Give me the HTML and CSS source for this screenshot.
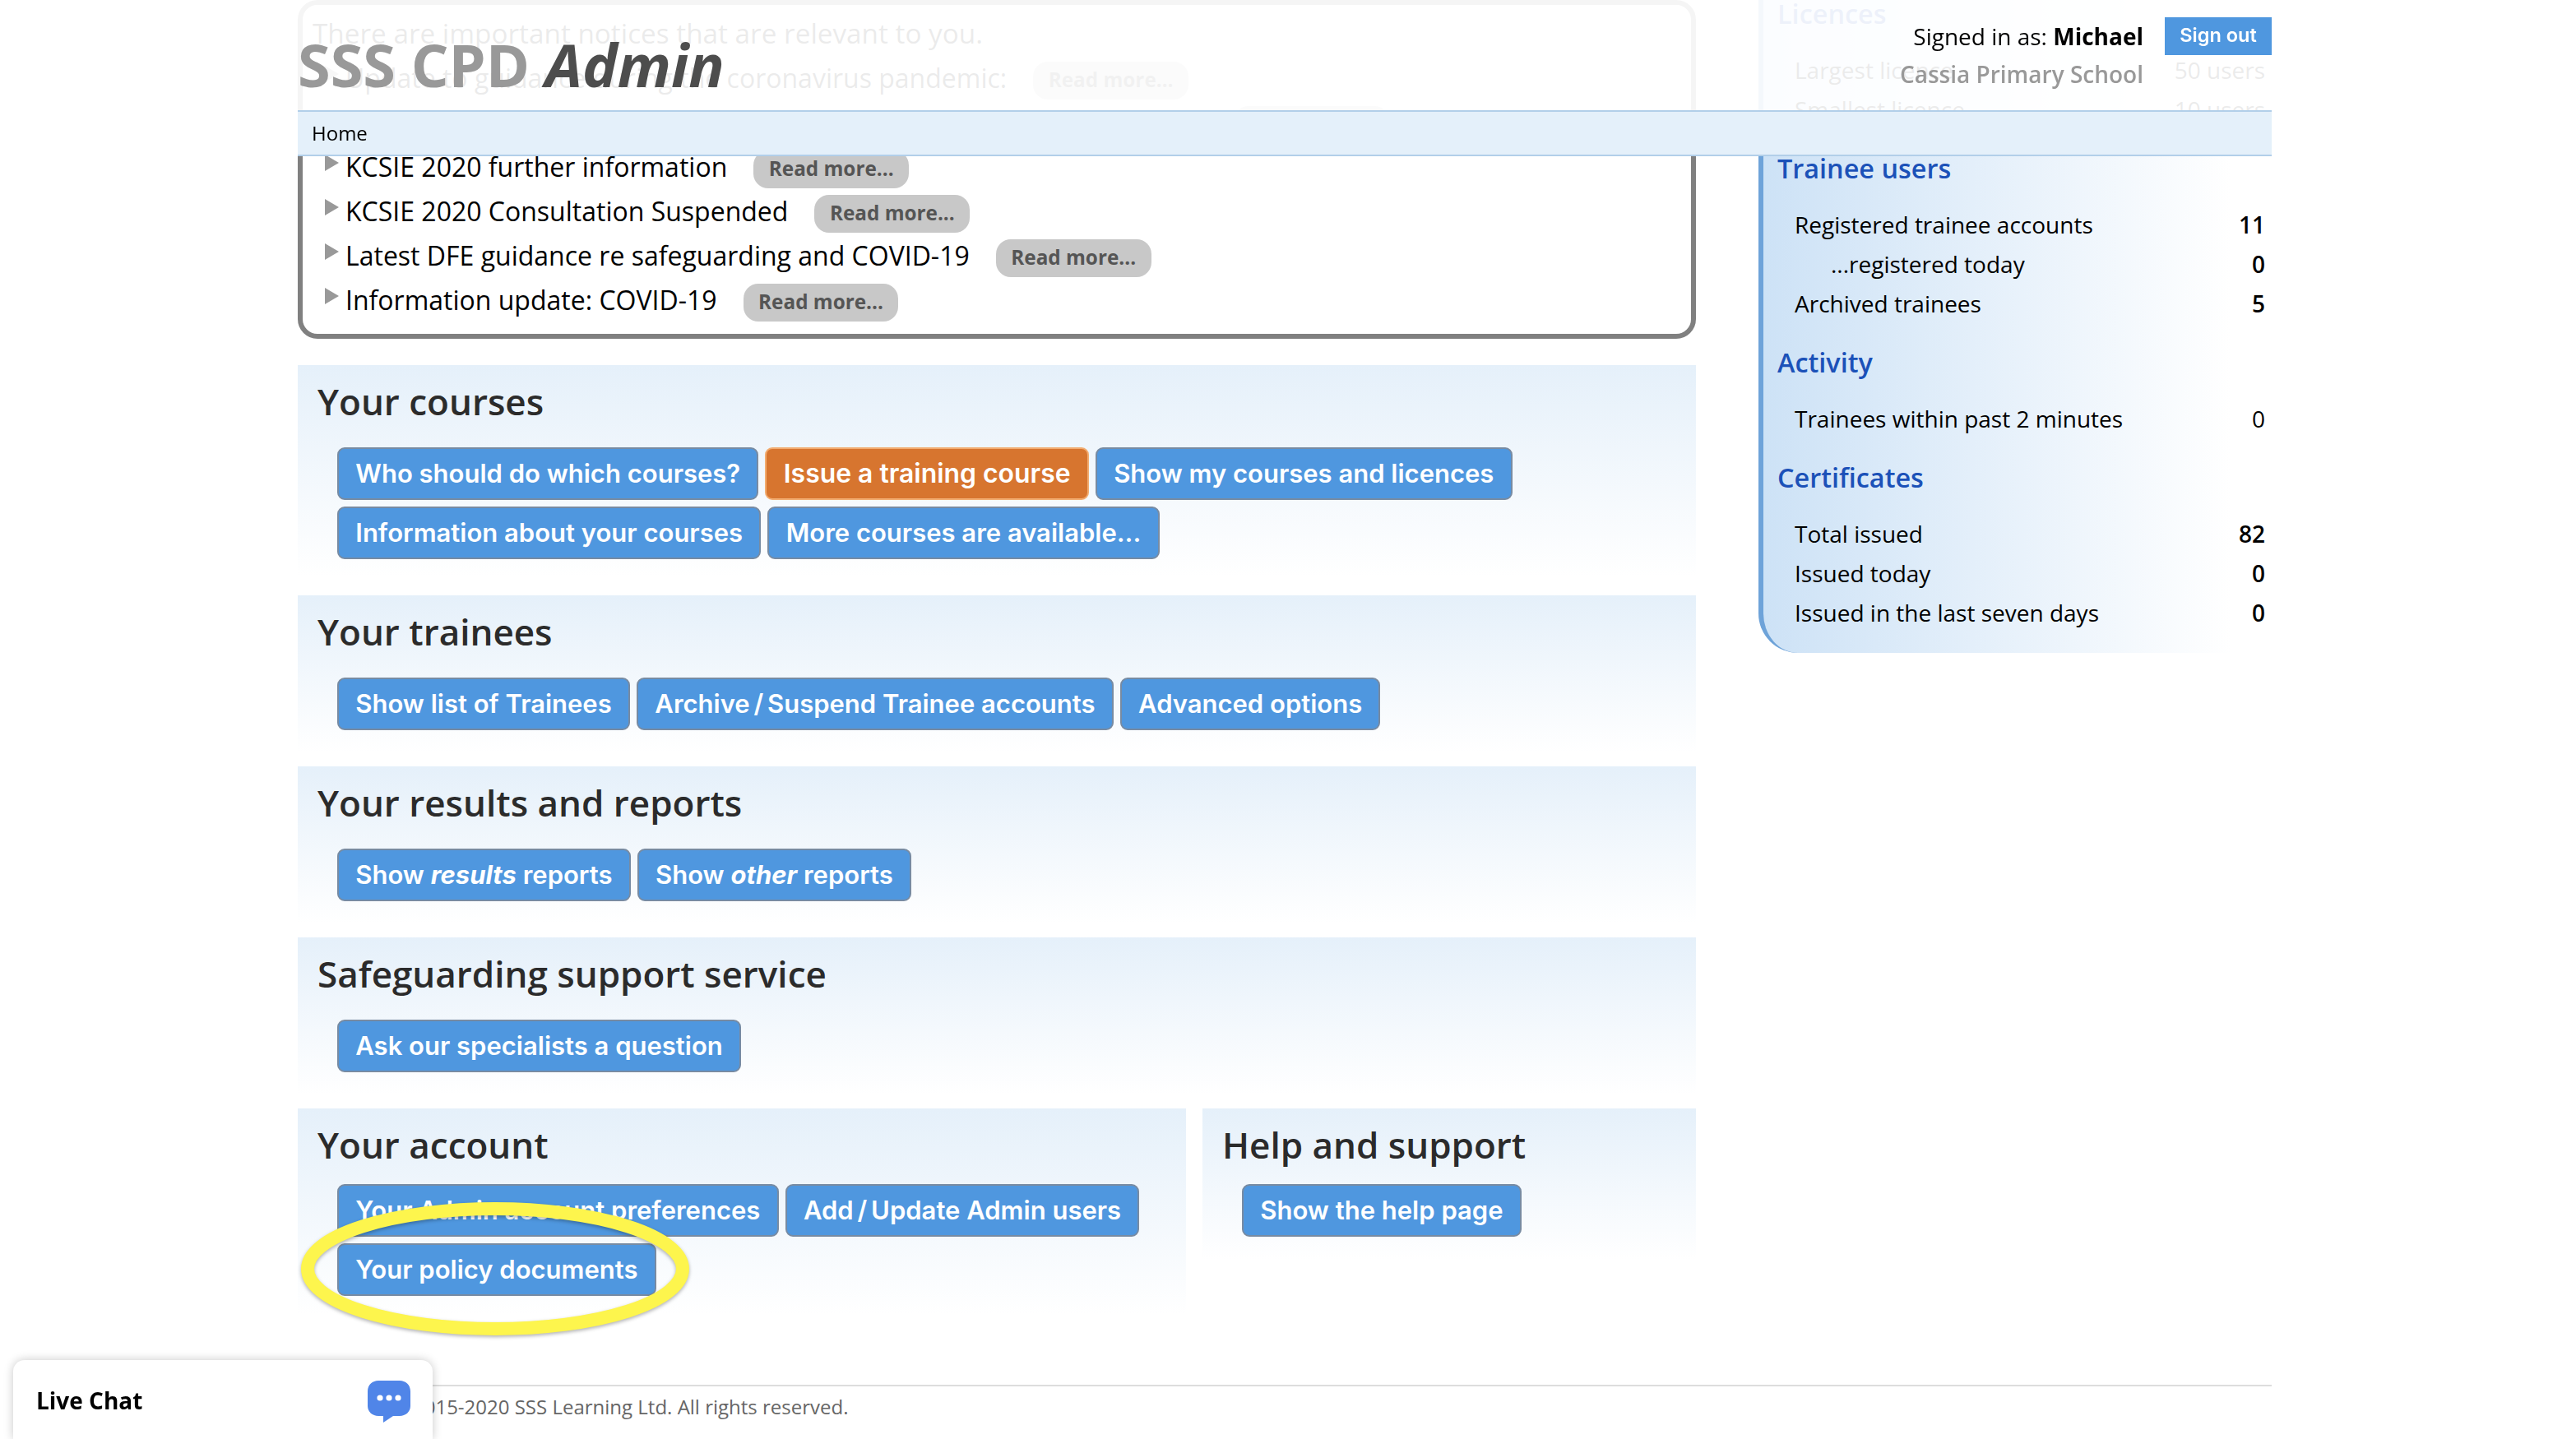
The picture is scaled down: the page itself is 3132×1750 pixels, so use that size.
FILE: index.html
```html
<!DOCTYPE html>
<html lang="en">
<head>
<meta charset="utf-8">
<title>SSS CPD Admin</title>
<link rel="stylesheet" href="styles.css">
</head>
<body>
<div class="page">
  <div class="columns">
    <main class="main">
      <section class="notices">
        <p class="notice-intro">There are important notices that are relevant to you.</p>
        <div class="notice"><span class="notice-text">Update to guidance during the coronavirus pandemic:</span><a class="more">Read more...</a></div>
        <div class="notice"><span class="notice-text">Keeping Children Safe in Education 2020 now in force from September</span><a class="more">Read more...</a></div>
        <div class="notice"><span class="notice-text">KCSIE 2020 further information</span><a class="more">Read more...</a></div>
        <div class="notice"><span class="notice-text">KCSIE 2020 Consultation Suspended</span><a class="more">Read more...</a></div>
        <div class="notice"><span class="notice-text">Latest DFE guidance re safeguarding and COVID-19</span><a class="more">Read more...</a></div>
        <div class="notice"><span class="notice-text">Information update: COVID-19</span><a class="more">Read more...</a></div>
      </section>

      <section class="card card-first">
        <h2>Your courses</h2>
        <div class="buttons">
          <a class="btn">Who should do which courses?</a>
          <a class="btn btn-orange">Issue a training course</a>
          <a class="btn">Show my courses and licences</a>
          <a class="btn">Information about your courses</a>
          <a class="btn">More courses are available...</a>
        </div>
      </section>

      <section class="card">
        <h2>Your trainees</h2>
        <div class="buttons">
          <a class="btn">Show list of Trainees</a>
          <a class="btn">Archive <span class="slash">/</span> Suspend Trainee accounts</a>
          <a class="btn">Advanced options</a>
        </div>
      </section>

      <section class="card">
        <h2>Your results and reports</h2>
        <div class="buttons">
          <a class="btn">Show <em>results</em> reports</a>
          <a class="btn">Show <em>other</em> reports</a>
        </div>
      </section>

      <section class="card">
        <h2>Safeguarding support service</h2>
        <div class="buttons">
          <a class="btn">Ask our specialists a question</a>
        </div>
      </section>

      <div class="card-pair">
        <section class="card card-tight card-account">
          <h2>Your account</h2>
          <div class="buttons">
            <a class="btn">Your Admin account preferences</a>
            <a class="btn">Add <span class="slash">/</span> Update Admin users</a>
            <a class="btn">Your policy documents</a>
          </div>
        </section>
        <section class="card card-tight card-help">
          <h2>Help and support</h2>
          <div class="buttons">
            <a class="btn">Show the help page</a>
          </div>
        </section>
      </div>
    </main>

    <aside class="side">
      <h3 class="side-first">Licences</h3>
      <dl class="stats">
        <div class="stat"><dt>Largest licence</dt><dd>50 users</dd></div>
        <div class="stat"><dt>Smallest licence</dt><dd>10 users</dd></div>
      </dl>
      <h3>Trainee users</h3>
      <dl class="stats">
        <div class="stat"><dt>Registered trainee accounts</dt><dd class="strong">11</dd></div>
        <div class="stat"><dt class="indent">...registered today</dt><dd class="strong">0</dd></div>
        <div class="stat"><dt>Archived trainees</dt><dd class="strong">5</dd></div>
      </dl>
      <h3>Activity</h3>
      <dl class="stats">
        <div class="stat"><dt>Trainees within past 2 minutes</dt><dd>0</dd></div>
      </dl>
      <h3>Certificates</h3>
      <dl class="stats">
        <div class="stat"><dt>Total issued</dt><dd class="strong">82</dd></div>
        <div class="stat"><dt>Issued today</dt><dd class="strong">0</dd></div>
        <div class="stat"><dt>Issued in the last seven days</dt><dd class="strong">0</dd></div>
      </dl>
    </aside>
  </div>

  <footer class="footer">©2015-2020 SSS Learning Ltd. All rights reserved.</footer>
</div>

<header class="header">
  <div class="header-top">
    <h1 class="logo">SSS CPD <em>Admin</em></h1>
    <div class="account">
      <div class="account-text">
        <div class="signed">Signed in as: <strong>Michael</strong></div>
        <div class="school">Cassia Primary School</div>
      </div>
      <a class="signout">Sign out</a>
    </div>
  </div>
  <nav class="crumbs">Home</nav>
</header>

<svg class="ring" width="500" height="190" viewBox="0 0 500 190" aria-hidden="true">
  <ellipse cx="250" cy="90" rx="228" ry="73" fill="none" stroke="#fdf54d" stroke-width="16"/>
</svg>

<aside class="chat">
  <span class="chat-label">Live Chat</span>
  <svg class="chat-icon" width="54" height="54" viewBox="0 0 54 54" aria-hidden="true">
    <path d="M14 1h26c7 0 13 5 13 13v18c0 7-6 12-13 12H32L20 52V44h-6C7 44 1 39 1 32V14C1 6 7 1 14 1z" fill="#5085e8"/>
    <circle cx="16" cy="22" r="3.6" fill="#fff"/>
    <circle cx="27" cy="22" r="3.6" fill="#fff"/>
    <circle cx="38" cy="22" r="3.6" fill="#fff"/>
  </svg>
</aside>
</body>
</html>
```

FILE: styles.css
```css
* { box-sizing: border-box; }

html, body {
  margin: 0;
  height: 100%;
  overflow: hidden;
  background: #fff;
}

body {
  font-family: "Open Sans", "Liberation Sans", sans-serif;
  color: #000;
}

.page {
  width: 2400px;
  margin-left: 362px;
}

.columns {
  display: flex;
  gap: 76px;
  align-items: flex-start;
}

.main {
  width: 1700px;
  flex: none;
}

/* Notices */
.notices {
  border: 6px solid #808080;
  border-radius: 24px;
  padding: 7px 0 15px 27px;
  margin-bottom: 32px;
}

.notice-intro {
  margin: 0 0 0 -15px;
  height: 54px;
  line-height: 54px;
  font-size: 33.3px;
  color: #000;
}

.notice {
  display: flex;
  align-items: center;
  height: 54px;
  font-size: 32px;
}

.notice::before {
  content: "";
  flex: none;
  align-self: flex-start;
  margin-top: 13px;
  margin-right: 8px;
  border-left: 17px solid #999;
  border-top: 10px solid transparent;
  border-bottom: 10px solid transparent;
}

.more {
  margin-left: 32px;
  height: 46px;
  line-height: 44px;
  margin-top: 7px;
  padding: 0 18.5px;
  border-radius: 18px;
  background: #c8c8c8;
  color: #555;
  font-size: 24.3px;
  font-weight: 700;
}

/* Cards */
.card {
  background: linear-gradient(#e5f0fa, #ffffff 92%);
  padding: 22px 24px 44px;
}

.card h2 {
  margin: 0 0 16px;
  height: 62px;
  line-height: 44px;
  font-size: 44px;
  font-weight: 600;
  color: #2b2b2b;
}

.buttons {
  display: flex;
  flex-wrap: wrap;
  gap: 8px;
  padding-left: 24px;
}

.btn {
  display: block;
  height: 64px;
  line-height: 60px;
  padding: 0 20.3px;
  border: 2px solid #778ba3;
  border-radius: 9px;
  background: #4f97df;
  color: #fff;
  font-family: Inter, "Liberation Sans", sans-serif;
  font-size: 31px;
  font-weight: 600;
  white-space: nowrap;
}

.btn em { font-weight: 700; }

.slash { margin: 0 -3px; }

.btn-orange {
  background: #d7752f;
  border-color: #f2ac70;
  font-size: 31.9px;
}

.card-pair {
  display: flex;
  gap: 20px;
  align-items: flex-start;
}

.card-tight h2 { margin-bottom: 8px; }

.card-account { width: 1080px; flex: none; }
.card-help { flex: 1; }

/* Side panel */
.side {
  flex: 1;
  height: 794px;
  border-left: 6px solid #6ea3d9;
  border-bottom-left-radius: 48px;
  background: linear-gradient(90deg, #cde2f6, #ffffff 92%);
  padding: 0 8px 0 17px;
}

.side h3 {
  margin: 0;
  height: 48px;
  line-height: 48px;
  font-size: 32.4px;
  font-weight: 600;
  color: #1b51b8;
}

.side-first { margin-top: -8px !important; }

.stats {
  margin: 21px 0 23px;
}

.stat {
  display: flex;
  justify-content: space-between;
  height: 48px;
  line-height: 48px;
  font-size: 28px;
  padding-left: 21px;
}

.stat dt { margin: 0; }
.stat dd { margin: 0; }
.stat .strong { font-weight: 600; }
.stat .indent { padding-left: 44px; }

/* Footer */
.footer {
  margin-top: 64px;
  border-top: 2px solid #dddddd;
  padding: 8px 0 0 120px;
  line-height: 34px;
  font-size: 24px;
  color: #666;
}

/* Fixed header */
.header {
  position: fixed;
  top: 0;
  left: 362px;
  width: 2400px;
  background: rgba(255, 255, 255, 0.92);
}

.header-top {
  display: flex;
  justify-content: space-between;
  height: 134px;
}

.logo {
  margin: 26px 0 0;
  font-size: 72px;
  line-height: 104px;
  font-weight: 700;
  color: #999;
}

.logo em { color: #4d4d4d; }

.account {
  display: flex;
  gap: 26px;
  padding-top: 21px;
  align-items: flex-start;
}

.account-text { text-align: right; padding-top: 3px; }

.signed {
  font-size: 28px;
  line-height: 40px;
}

.signed strong { font-weight: 700; }

.school {
  font-size: 28px;
  line-height: 40px;
  margin-top: 6px;
  font-weight: 600;
  color: #999;
}

.signout {
  width: 130px;
  height: 46px;
  line-height: 44px;
  text-align: center;
  background: #4f97df;
  color: #fff;
  font-family: Inter, "Liberation Sans", sans-serif;
  font-size: 23.5px;
  font-weight: 600;
}

.crumbs {
  height: 56px;
  line-height: 52px;
  border-top: 2px solid #b2cfe9;
  border-bottom: 2px solid #b2cfe9;
  background: #e4f0fa;
  padding-left: 17px;
  font-size: 24px;
}

/* Hand-drawn highlight over the policy button */
.ring {
  position: fixed;
  left: 352px;
  top: 1453px;
  filter: drop-shadow(0 2px 2px rgba(0, 0, 0, 0.3));
}

/* Live chat widget */
.chat {
  position: fixed;
  left: 16px;
  bottom: 0;
  width: 510px;
  height: 96px;
  display: flex;
  justify-content: space-between;
  padding: 24px 26px 0 28px;
  background: #fff;
  border-radius: 14px 14px 0 0;
  box-shadow: 0 0 12px rgba(0, 0, 0, 0.22);
}

.chat-label {
  font-size: 28px;
  font-weight: 700;
  line-height: 50px;
}
```
